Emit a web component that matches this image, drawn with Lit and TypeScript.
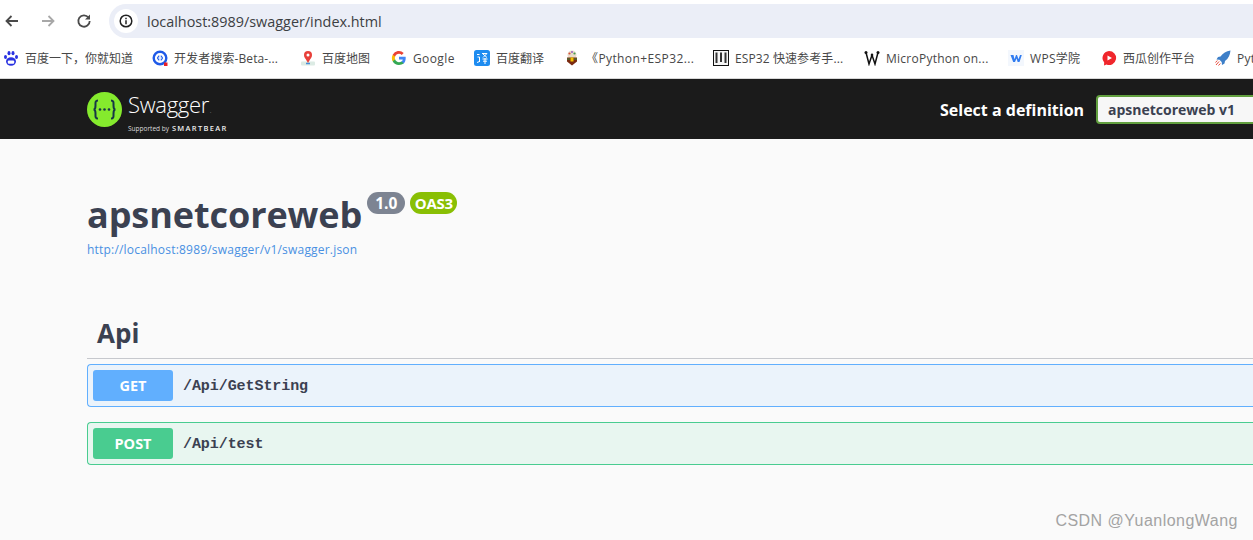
import { LitElement, html, css, svg } from "lit";
import { customElement } from "lit/decorators.js";

const baidu = svg`<svg class="bi" viewBox="0 0 16 16"><ellipse cx="8" cy="11.500" rx="5" ry="4.200" fill="#2932e1"/><ellipse cx="2.500" cy="7" rx="1.500" ry="2" fill="#2932e1"/><ellipse cx="6" cy="3.200" rx="1.500" ry="2.100" fill="#2932e1"/><ellipse cx="10" cy="3.200" rx="1.500" ry="2.100" fill="#2932e1"/><ellipse cx="13.500" cy="7" rx="1.500" ry="2" fill="#2932e1"/><rect x="4.800" y="10.500" width="6.400" height="3.200" rx="1" fill="#fff"/></svg>`;
const devsearch = svg`<svg class="bi" viewBox="0 0 16 16"><circle cx="8" cy="8" r="6.300" fill="none" stroke="#1f5ae8" stroke-width="2.400"/><circle cx="8" cy="8" r="3" fill="#dfe9fd"/><path d="M7 5.800 5.500 8 7 10.200M9 5.800 10.500 8 9 10.200" fill="none" stroke="#1f5ae8" stroke-width="1.100"/><rect x="12" y="12.500" width="3.500" height="3.500" fill="#e8202a"/></svg>`;
const map = svg`<svg class="bi" viewBox="0 0 16 16"><rect x="1" y="11.500" width="14" height="4" rx="1" fill="#dcebe4"/><path d="M6 13.500h4" stroke="#4a90d8" stroke-width="1.500"/><circle cx="8" cy="5" r="4" fill="#e8403a"/><path d="M4.800 7.500 8 13l3.200-5.500z" fill="#e8403a"/><circle cx="8" cy="5" r="1.500" fill="#fff"/></svg>`;
const google = svg`<svg class="bi" viewBox="0 0 16 16"><path d="M14.700 8.200c0-.5 0-1-.1-1.400H8v2.700h3.800a3.300 3.300 0 0 1-1.400 2.100v1.800h2.300c1.300-1.300 2-3 2-5.200z" fill="#4285f4"/><path d="M8 15c1.900 0 3.400-.6 4.700-1.700l-2.300-1.800c-.6.400-1.400.7-2.400.7-1.800 0-3.400-1.200-3.900-2.900H1.700v1.900A7 7 0 0 0 8 15z" fill="#34a853"/><path d="M4.100 9.300a4.200 4.200 0 0 1 0-2.700V4.700H1.700a7 7 0 0 0 0 6.500z" fill="#fbbc05"/><path d="M8 3.800c1 0 2 .4 2.700 1.100l2-2A7 7 0 0 0 1.700 4.700l2.400 1.900C4.600 5 6.200 3.800 8 3.800z" fill="#ea4335"/></svg>`;
const fanyi = svg`<svg class="bi" viewBox="0 0 16 16"><rect width="16" height="16" rx="2.500" fill="#1e8cf0"/><path d="M3 4.500h2.500M3.500 7h2v5M3 12.500l2.500-1M8 3.500h5L9 7.500M9 4l4 3.500M8.500 9h5M9 11.200h4M11 8v6" stroke="#fff" stroke-width="1" fill="none"/></svg>`;
const py = svg`<svg class="bi" viewBox="0 0 16 16"><circle cx="8" cy="5" r="4.500" fill="#e8dcc8"/><circle cx="5.500" cy="3.500" r="1.100" fill="#d8503a"/><circle cx="10.500" cy="3.500" r="1.100" fill="#4a9a50"/><circle cx="8" cy="2" r="1" fill="#9a60c0"/><path d="M3 7.500h10v4L8 15.500l-5-4z" fill="#7a2a10"/><rect x="6.500" y="7.500" width="3" height="4" fill="#f2c200"/><path d="M3 9h3M10 9h3" stroke="#3a8a40" stroke-width="1.200"/></svg>`;
const esp = svg`<svg class="bi" viewBox="0 0 16 16"><rect x=".5" y=".5" width="15" height="15" fill="#f6f6f6" stroke="#111"/><path d="M3.500 2.500V13M8 2.500V12M12.500 2.500V13" fill="none" stroke="#333" stroke-width="2"/></svg>`;
const mp = svg`<svg class="bi" viewBox="0 0 16 16"><path d="M2 2.500 5 14 8 5l3 9 3-11.500" fill="none" stroke="#111" stroke-width="1.500"/><circle cx="2" cy="2.500" r="1.500" fill="#111"/><circle cx="14" cy="2.500" r="1.500" fill="#111"/><circle cx="8" cy="5" r="1.300" fill="#111"/></svg>`;
const wps = svg`<svg class="bi" viewBox="0 0 16 16"><rect width="16" height="16" fill="#f3f7fd"/><path d="M2.500 5h3l1 4.200L8 5h1l1.500 4.200L12 5h1.800l-2.300 7h-1.800L8.500 8.500 7 12H5.200z" fill="#2f7bf0"/></svg>`;
const xigua = svg`<svg class="bi" viewBox="0 0 16 16"><path d="M8 1a7 7 0 1 1-2.500 13.500L3 15.500l.2-3A7 7 0 0 1 8 1z" fill="#f0262c"/><path d="M6.500 5.500 11 8l-4.500 2.500z" fill="#fff"/></svg>`;
const rocket = svg`<svg class="bi" viewBox="0 0 16 16"><path d="M15.500.5C11 1 8 3 5.500 6.500L3 7 1.500 9.500l3 .3 2.200 2.200.3 3 2.500-1.500.5-2.500C13.500 8.500 15 5 15.500.5z" fill="#3d7fc8"/><path d="M1 15l3-3.500M3.500 15.500l1.800-2M.5 12.500l1.800-2" stroke="#e8483a" stroke-width="1"/></svg>`;

const bookmarks: [unknown, string, number, number][] = [
  [baidu, "百度一下，你就知道", 149, 0],
  [devsearch, "开发者搜索-Beta-...", 148, 0.1],
  [map, "百度地图", 91, 0],
  [google, "Google", 83, 0.4],
  [fanyi, "百度翻译", 90, 0],
  [py, "《Python+ESP32...", 149, 0.4],
  [esp, "ESP32 快速参考手...", 151, 0.1],
  [mp, "MicroPython on...", 144, 0.25],
  [wps, "WPS学院", 93, 0.3],
  [xigua, "西瓜创作平台", 114, 0],
  [rocket, "Python", 60, 0.3],
];

@customElement("app-root")
export class AppRoot extends LitElement {
  static styles = css`
    :host {
      display: block;
      width: 1253px;
      height: 540px;
      overflow: hidden;
      background: #fafafa;
      font-family: "Open Sans", "Noto Sans CJK SC", sans-serif;
    }
    .toolbar {
      height: 38px;
      background: #fff;
      display: flex;
      align-items: center;
      box-sizing: border-box;
      padding: 0 0 0 3px;
    }
    .nav {
      width: 18px;
      height: 18px;
      margin: 4px 18px 0 0;
      flex: none;
    }
    .nav.last { margin-right: 16px; }
    .omni {
      flex: 1;
      height: 34px;
      margin-top: 4px;
      background: #ebeef7;
      border-radius: 17px 0 0 17px;
      display: flex;
      align-items: center;
      padding-left: 5px;
      color: #3c4043;
      font-size: 14.4px;
      gap: 9px;
    }
    .site {
      width: 24px;
      height: 24px;
      border-radius: 50%;
      background: #fff;
      display: flex;
      align-items: center;
      justify-content: center;
    }
    .bookmarks {
      height: 41px;
      background: #fff;
      display: flex;
      align-items: center;
      padding-left: 3px;
      font-size: 12px;
      color: #474747;
      white-space: nowrap;
      overflow: hidden;
      border-bottom: 1px solid #d8d8d8;
      box-sizing: border-box;
    }
    .bm { display: flex; align-items: center; gap: 6px; flex: none; }
    .bi { width: 16px; height: 16px; flex: none; }
    .topbar {
      height: 60px;
      background: #1b1b1b;
      display: flex;
      align-items: center;
      padding-left: 87px;
      box-sizing: border-box;
      white-space: nowrap;
    }
    .logo { display: flex; align-items: center; gap: 6px; flex: none; width: 853px; }
    .logo-ball { width: 35px; height: 35px; flex: none; }
    .logo-text { display: flex; flex-direction: column; color: #fff; margin-top: 6px; }
    .logo-name { font-family: "Open Sans", sans-serif; font-weight: 300; font-size: 22px; line-height: 26px; letter-spacing: -0.3px; }
    .logo-name sup { font-size: 5px; vertical-align: baseline; margin-left: 1px; }
    .logo-sup { display: flex; align-items: baseline; gap: 3px; font-size: 6.500px; line-height: 9px; color: #ddd; }
    .logo-sup b { font-size: 7.500px; font-weight: 600; letter-spacing: 1.300px; color: #eee; }
    .def-label { color: #fff; font-weight: 700; font-size: 16px; margin: 1px 12px 0 0; flex: none; }
    .select {
      flex: none;
      width: 200px;
      height: 29px;
      box-sizing: border-box;
      border: 2px solid #62a03f;
      border-radius: 4px;
      background: #f7f7f7;
      color: #3b4151;
      font-weight: 700;
      font-size: 14px;
      display: flex;
      align-items: center;
      padding-left: 10px;
    }
    .main { padding: 0 0 0 87px; color: #3b4151; }
    .title-row { display: flex; align-items: flex-start; padding-top: 52px; height: 48px; }
    h1 { margin: 0; font-size: 36px; line-height: 48px; font-weight: 700; letter-spacing: -0.08px; }
    .badge {
      height: 22px;
      margin-top: 1px;
      border-radius: 12px;
      color: #fff;
      font-weight: 700;
      display: flex;
      align-items: center;
      justify-content: center;
      box-sizing: border-box;
    }
    .ver { background: #7d8492; width: 38px; font-size: 15.500px; margin-left: 5px; }
    .oas { background: #89bf04; width: 47px; font-size: 15px; letter-spacing: -0.3px; margin-left: 5px; }
    .url {
      display: block;
      margin-top: 2px;
      font-size: 12px;
      line-height: 17px;
      letter-spacing: 0.2px;
      color: #4990e2;
    }
    h2 {
      margin: 58px 0 0;
      height: 43px;
      padding-left: 10px;
      box-sizing: border-box;
      font-size: 26px;
      line-height: 34px;
      font-weight: 700;
      border-bottom: 1px solid #c6c8cd;
    }
    .op {
      height: 43px;
      box-sizing: border-box;
      border: 1px solid;
      border-right: 0;
      border-radius: 4px 0 0 4px;
      display: flex;
      align-items: center;
      padding-left: 5px;
      margin-top: 5px;
    }
    .op.get { border-color: #61affe; background: #ebf3fb; }
    .op.post { border-color: #49cc90; background: #e8f6f0; margin-top: 15px; }
    .method {
      width: 80px;
      height: 31px;
      border-radius: 3px;
      color: #fff;
      font-size: 14.500px;
      font-weight: 700;
      display: flex;
      align-items: center;
      justify-content: center;
    }
    .get .method { background: #61affe; }
    .post .method { background: #49cc90; }
    .path {
      margin-left: 10px;
      padding-top: 2px;
      font-family: "Liberation Mono", monospace;
      font-weight: 700;
      font-size: 15px;
      letter-spacing: -0.07px;
      color: #3b4151;
    }
    .watermark-row {
      display: flex;
      justify-content: flex-end;
      padding: 46px 15px 0 0;
      font-family: "Liberation Sans", sans-serif;
      font-size: 16px;
      line-height: 20px;
      color: #a3a3a3;
      letter-spacing: 0.48px;
    }
  `;

  render() {
    return html`
      <div class="toolbar">
        <svg class="nav" viewBox="0 0 18 18"><path d="M15 9H3.500M8.500 4 3.500 9 8.500 14" fill="none" stroke="#4a4a4a" stroke-width="1.800"/></svg>
        <svg class="nav" viewBox="0 0 18 18"><path d="M3 9h11.500M9.500 4 14.500 9 9.500 14" fill="none" stroke="#a8a8a8" stroke-width="1.800"/></svg>
        <svg class="nav last" viewBox="0 0 18 18"><path d="M13.500 5.500A5.700 5.700 0 1 0 14.700 9" fill="none" stroke="#4a4a4a" stroke-width="1.800"/><path d="M15 2.500v5h-5z" fill="#4a4a4a"/></svg>
        <div class="omni">
          <span class="site"><svg width="14" height="14" viewBox="0 0 14 14"><circle cx="7" cy="7" r="5.800" fill="none" stroke="#222" stroke-width="1.500"/><path d="M7 6.200v4M7 3.800v1.500" stroke="#222" stroke-width="1.500"/></svg></span>
          <span>localhost:8989/swagger/index.html</span>
        </div>
      </div>
      <div class="bookmarks">
        ${bookmarks.map(([icon, label, w, ls]) => html`<span class="bm" style="width:${w}px;letter-spacing:${ls}px">${icon}<span>${label}</span></span>`)}
      </div>
      <div class="topbar">
        <div class="logo">
          <svg class="logo-ball" viewBox="0 0 35 35">
            <circle cx="17.500" cy="17.500" r="17.500" fill="#85ea2d"/>
            <path d="M11 8.500c-3 0-2.500 2.500-2.500 5 0 2.200-.6 4-2 4 1.400 0 2 1.800 2 4 0 2.500-.5 5 2.500 5M24 8.500c3 0 2.500 2.500 2.500 5 0 2.200.6 4 2 4-1.400 0-2 1.800-2 4 0 2.500.5 5-2.500 5" fill="none" stroke="#173647" stroke-width="2"/>
            <circle cx="13" cy="17.500" r="1.300" fill="#173647"/><circle cx="17.500" cy="17.500" r="1.300" fill="#173647"/><circle cx="22" cy="17.500" r="1.300" fill="#173647"/>
          </svg>
          <div class="logo-text">
            <span class="logo-name">Swagger<sup>.</sup></span>
            <span class="logo-sup">Supported by <b>SMARTBEAR</b></span>
          </div>
        </div>
        <span class="def-label">Select a definition</span>
        <div class="select">apsnetcoreweb v1</div>
      </div>
      <div class="main">
        <div class="title-row">
          <h1>apsnetcoreweb</h1>
          <span class="badge ver">1.0</span>
          <span class="badge oas">OAS3</span>
        </div>
        <span class="url">http://localhost:8989/swagger/v1/swagger.json</span>
        <h2>Api</h2>
        <div class="op get"><span class="method">GET</span><span class="path">/Api/GetString</span></div>
        <div class="op post"><span class="method">POST</span><span class="path">/Api/test</span></div>
      </div>
      <div class="watermark-row">CSDN @YuanlongWang</div>
    `;
  }
}
